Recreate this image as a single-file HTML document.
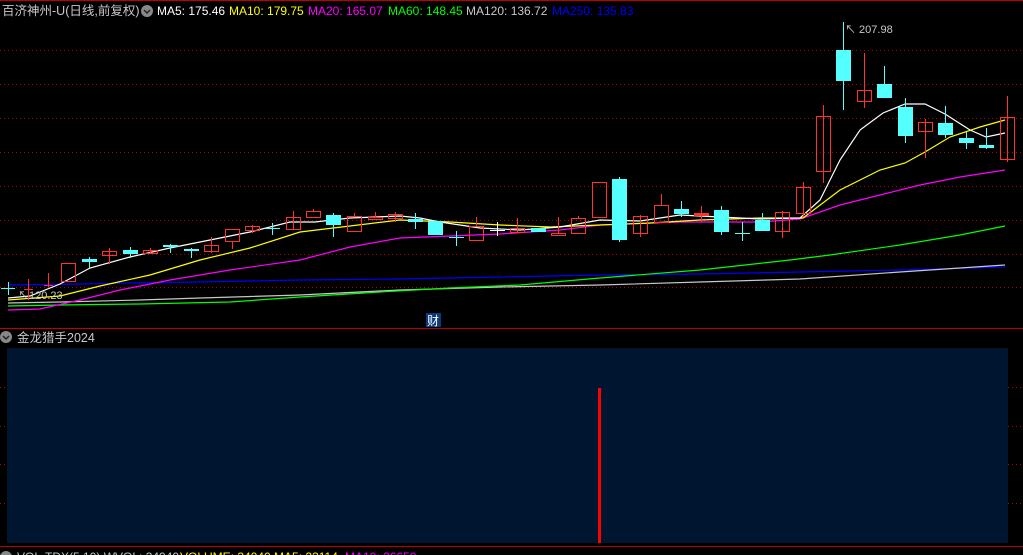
<!DOCTYPE html>
<html><head><meta charset="utf-8"><style>
html,body{margin:0;padding:0;background:#000;width:1023px;height:555px;overflow:hidden}
svg{display:block}
text{font-family:"Liberation Sans","Noto Sans CJK SC",sans-serif}
</style></head><body>
<svg width="1023" height="555" viewBox="0 0 1023 555" xmlns="http://www.w3.org/2000/svg">
<rect width="1023" height="555" fill="#000"/>
<line x1="0" y1="0.5" x2="1023" y2="0.5" stroke="#c00000"/>
<g stroke="#b00000" stroke-dasharray="1,3">
<line x1="0" y1="50.5" x2="1023" y2="50.5"/><line x1="0" y1="84.5" x2="1023" y2="84.5"/>
<line x1="0" y1="118.5" x2="1023" y2="118.5"/><line x1="0" y1="152.5" x2="1023" y2="152.5"/>
<line x1="0" y1="186.5" x2="1023" y2="186.5"/><line x1="0" y1="220.5" x2="1023" y2="220.5"/>
<line x1="0" y1="254.5" x2="1023" y2="254.5"/><line x1="0" y1="287.5" x2="1023" y2="287.5"/>
<line x1="0" y1="387.5" x2="1023" y2="387.5"/><line x1="0" y1="426.5" x2="1023" y2="426.5"/>
<line x1="0" y1="464.5" x2="1023" y2="464.5"/><line x1="0" y1="503.5" x2="1023" y2="503.5"/>
</g>
<line x1="0" y1="328.5" x2="1023" y2="328.5" stroke="#c00000"/>
<line x1="0" y1="546.5" x2="1023" y2="546.5" stroke="#c00000"/>
<rect x="7" y="348" width="1001" height="195" fill="#001530"/>
<rect x="598" y="388" width="3" height="155" fill="#ff0000"/>

<!-- MA lines -->
<g fill="none" stroke-width="1.2">
<polyline stroke="#0000ff" points="8,285 80,284 130,283 200,282 300,280 400,279 500,277 600,275 700,274 800,272 900,270 1005,267"/>
<polyline stroke="#c8c8c8" points="8,303 60,302 140,300 200,298 300,295 400,290 500,287 600,285 700,282 800,279 900,272 960,268 1005,265"/>
<polyline stroke="#00ff00" points="8,306 60,305 140,304 230,302 300,297 380,292 450,288 520,285 600,278 700,270 790,260 830,255 900,245 960,235 1005,226"/>
<polyline stroke="#ff00ff" points="8,310 40,309 80,300 120,290 170,280 230,270 300,260 350,247 400,238 450,236 500,234 560,230 600,225 680,222 760,222 800,219 840,205 880,195 920,185 960,177 1005,170"/>
<polyline stroke="#ffff00" points="8,300 60,296 100,286 150,275 200,260 250,248 300,232 350,226 400,220 450,222 500,225 550,227 600,225 650,223 700,220 760,218 803,218 840,190 880,170 905,163 925,152 950,137 980,127 1005,120"/>
<polyline stroke="#ffffff" points="8,298 30,296 60,284 90,268 130,257 170,248 210,240 250,232 290,222 315,222 350,218 400,216 420,218 440,222 480,228 520,230 560,227 600,220 640,221 680,215 720,217 760,219 800,218 820,200 840,160 860,130 883,113 905,104 925,104 945,114 970,130 986,137 1005,133"/>
</g>

<!-- candles: red hollow -->
<g fill="none" stroke="#ff3232" stroke-width="1">
<path d="M28.5 279V300M24 289.5h9M48.5 273V287M44 285.5h9"/>
<rect x="61.5" y="263.5" width="14" height="18"/>
<path d="M109.5 248V264"/><rect x="102.5" y="251.5" width="14" height="4"/>
<path d="M150.5 248V254"/><rect x="143.5" y="250.5" width="14" height="3"/>
<path d="M211.5 237V253"/><rect x="204.5" y="245.5" width="14" height="6"/>
<path d="M232.5 241V249"/><rect x="225.5" y="229.5" width="14" height="12"/>
<path d="M252.5 225V233"/><rect x="245.5" y="226.5" width="14" height="4"/>
<path d="M293.5 211V230"/><rect x="286.5" y="217.5" width="14" height="12"/>
<path d="M313.5 209V211"/><rect x="306.5" y="211.5" width="14" height="6"/>
<path d="M354.5 213V216"/><rect x="347.5" y="216.5" width="14" height="15"/>
<path d="M375.5 212V217"/><rect x="368.5" y="217.5" width="14" height="2"/>
<path d="M395.5 212V222"/><rect x="388.5" y="214.5" width="14" height="4"/>
<path d="M476.5 217V226"/><rect x="469.5" y="226.5" width="14" height="14"/>
<path d="M517.5 218V233"/><rect x="510.5" y="228.5" width="14" height="4"/>
<path d="M558.5 217V233"/><rect x="551.5" y="233.5" width="14" height="2"/>
<path d="M578.5 216V218"/><rect x="571.5" y="218.5" width="14" height="15"/>
<rect x="592.5" y="182.5" width="14" height="35"/>
<path d="M640.5 215V237"/><rect x="633.5" y="216.5" width="14" height="17"/>
<path d="M661.5 194V205"/><rect x="654.5" y="205.5" width="14" height="17"/>
<path d="M701.5 206V222"/>
<path d="M782.5 211V238"/><rect x="775.5" y="212.5" width="14" height="19"/>
<path d="M803.5 182V217"/><rect x="796.5" y="187.5" width="14" height="26"/>
<path d="M823.5 105V183"/><rect x="816.5" y="116.5" width="14" height="55"/>
<path d="M864.5 53V108"/><rect x="857.5" y="90.5" width="14" height="11"/>
<path d="M925.5 119V158"/><rect x="918.5" y="122.5" width="14" height="9"/>
<path d="M1007.5 96V162"/><rect x="1000.5" y="117.5" width="14" height="42"/>
</g>
<rect x="694" y="213" width="15" height="3" fill="#ff3232"/>
<!-- cyan -->
<g fill="#54ffff">
<rect x="1" y="288" width="14" height="1"/><rect x="8" y="282" width="1" height="13"/>
<rect x="82" y="259" width="15" height="3"/><rect x="89" y="257" width="1" height="11"/>
<rect x="123" y="250" width="15" height="4"/><rect x="130" y="247" width="1" height="11"/>
<rect x="163" y="245" width="15" height="2"/><rect x="170" y="244" width="1" height="9"/>
<rect x="184" y="249" width="15" height="2"/><rect x="191" y="248" width="1" height="10"/>
<rect x="265" y="228" width="15" height="1"/><rect x="272" y="223" width="1" height="12"/>
<rect x="326" y="215" width="15" height="10"/><rect x="333" y="213" width="1" height="24"/>
<rect x="408" y="219" width="15" height="3"/><rect x="415" y="213" width="1" height="16"/>
<rect x="428" y="221" width="15" height="14"/>
<rect x="449" y="237" width="15" height="1"/><rect x="456" y="231" width="1" height="15"/>
<rect x="531" y="228" width="15" height="4"/>
<rect x="612" y="179" width="15" height="61"/><rect x="619" y="177" width="1" height="65"/>
<rect x="674" y="209" width="15" height="5"/><rect x="681" y="201" width="1" height="16"/>
<rect x="714" y="210" width="15" height="22"/><rect x="721" y="206" width="1" height="29"/>
<rect x="735" y="233" width="15" height="1"/><rect x="742" y="222" width="1" height="19"/>
<rect x="755" y="220" width="15" height="11"/><rect x="762" y="213" width="1" height="10"/>
<rect x="836" y="50" width="15" height="31"/><rect x="843" y="22" width="1" height="88"/>
<rect x="877" y="84" width="15" height="14"/><rect x="884" y="66" width="1" height="20"/>
<rect x="898" y="107" width="15" height="29"/><rect x="905" y="98" width="1" height="45"/>
<rect x="938" y="123" width="15" height="12"/><rect x="945" y="106" width="1" height="32"/>
<rect x="959" y="138" width="15" height="5"/><rect x="966" y="132" width="1" height="17"/>
<rect x="979" y="145" width="15" height="3"/><rect x="986" y="128" width="1" height="21"/>
</g>
<g fill="#fff"><rect x="490" y="230" width="15" height="1"/><rect x="497" y="222" width="1" height="14"/></g>

<text x="18" y="299" font-size="11" fill="#c8c8c8">↖120.23</text>
<text x="845" y="33" font-size="11" fill="#c8c8c8">↖ 207.98</text>
<rect x="426" y="313" width="15" height="14" fill="#0a3a7a"/>
<text x="427" y="325" font-size="12" fill="#fff">财</text>

<!-- header -->
<text y="15" font-size="12.5">
<tspan x="2" fill="#c8c8c8">百济神州-U(日线,前复权)</tspan>
</text>
<circle cx="147" cy="11" r="6" fill="#888"/><path d="M144 10l3 3 3-3" stroke="#222" fill="none" stroke-width="1.5"/>
<text y="15" font-size="12">
<tspan x="157" fill="#fff">MA5: 175.46</tspan>
<tspan x="229" fill="#ffff00">MA10: 179.75</tspan>
<tspan x="308" fill="#ff00ff">MA20: 165.07</tspan>
<tspan x="388" fill="#00ff00">MA60: 148.45</tspan>
<tspan x="466" fill="#c8c8c8">MA120: 136.72</tspan>
<tspan x="552" fill="#0000ff">MA250: 135.83</tspan>
</text>
<circle cx="6" cy="337" r="6" fill="#888"/><path d="M3 336l3 3 3-3" stroke="#222" fill="none" stroke-width="1.5"/>
<text x="17" y="342" font-size="12.5" fill="#c8c8c8">金龙猎手2024</text>
<circle cx="6" cy="557" r="6" fill="#888"/>
<text y="561" font-size="12">
<tspan x="17" fill="#c8c8c8">VOL-TDX(5,10)  WVOL: 34940</tspan>
<tspan x="180" fill="#ffff00">VOLUME: 34940  MA5: 23114</tspan>
<tspan x="345" fill="#ff00ff">MA10: 26650</tspan>
</text>
</svg>
</body></html>
